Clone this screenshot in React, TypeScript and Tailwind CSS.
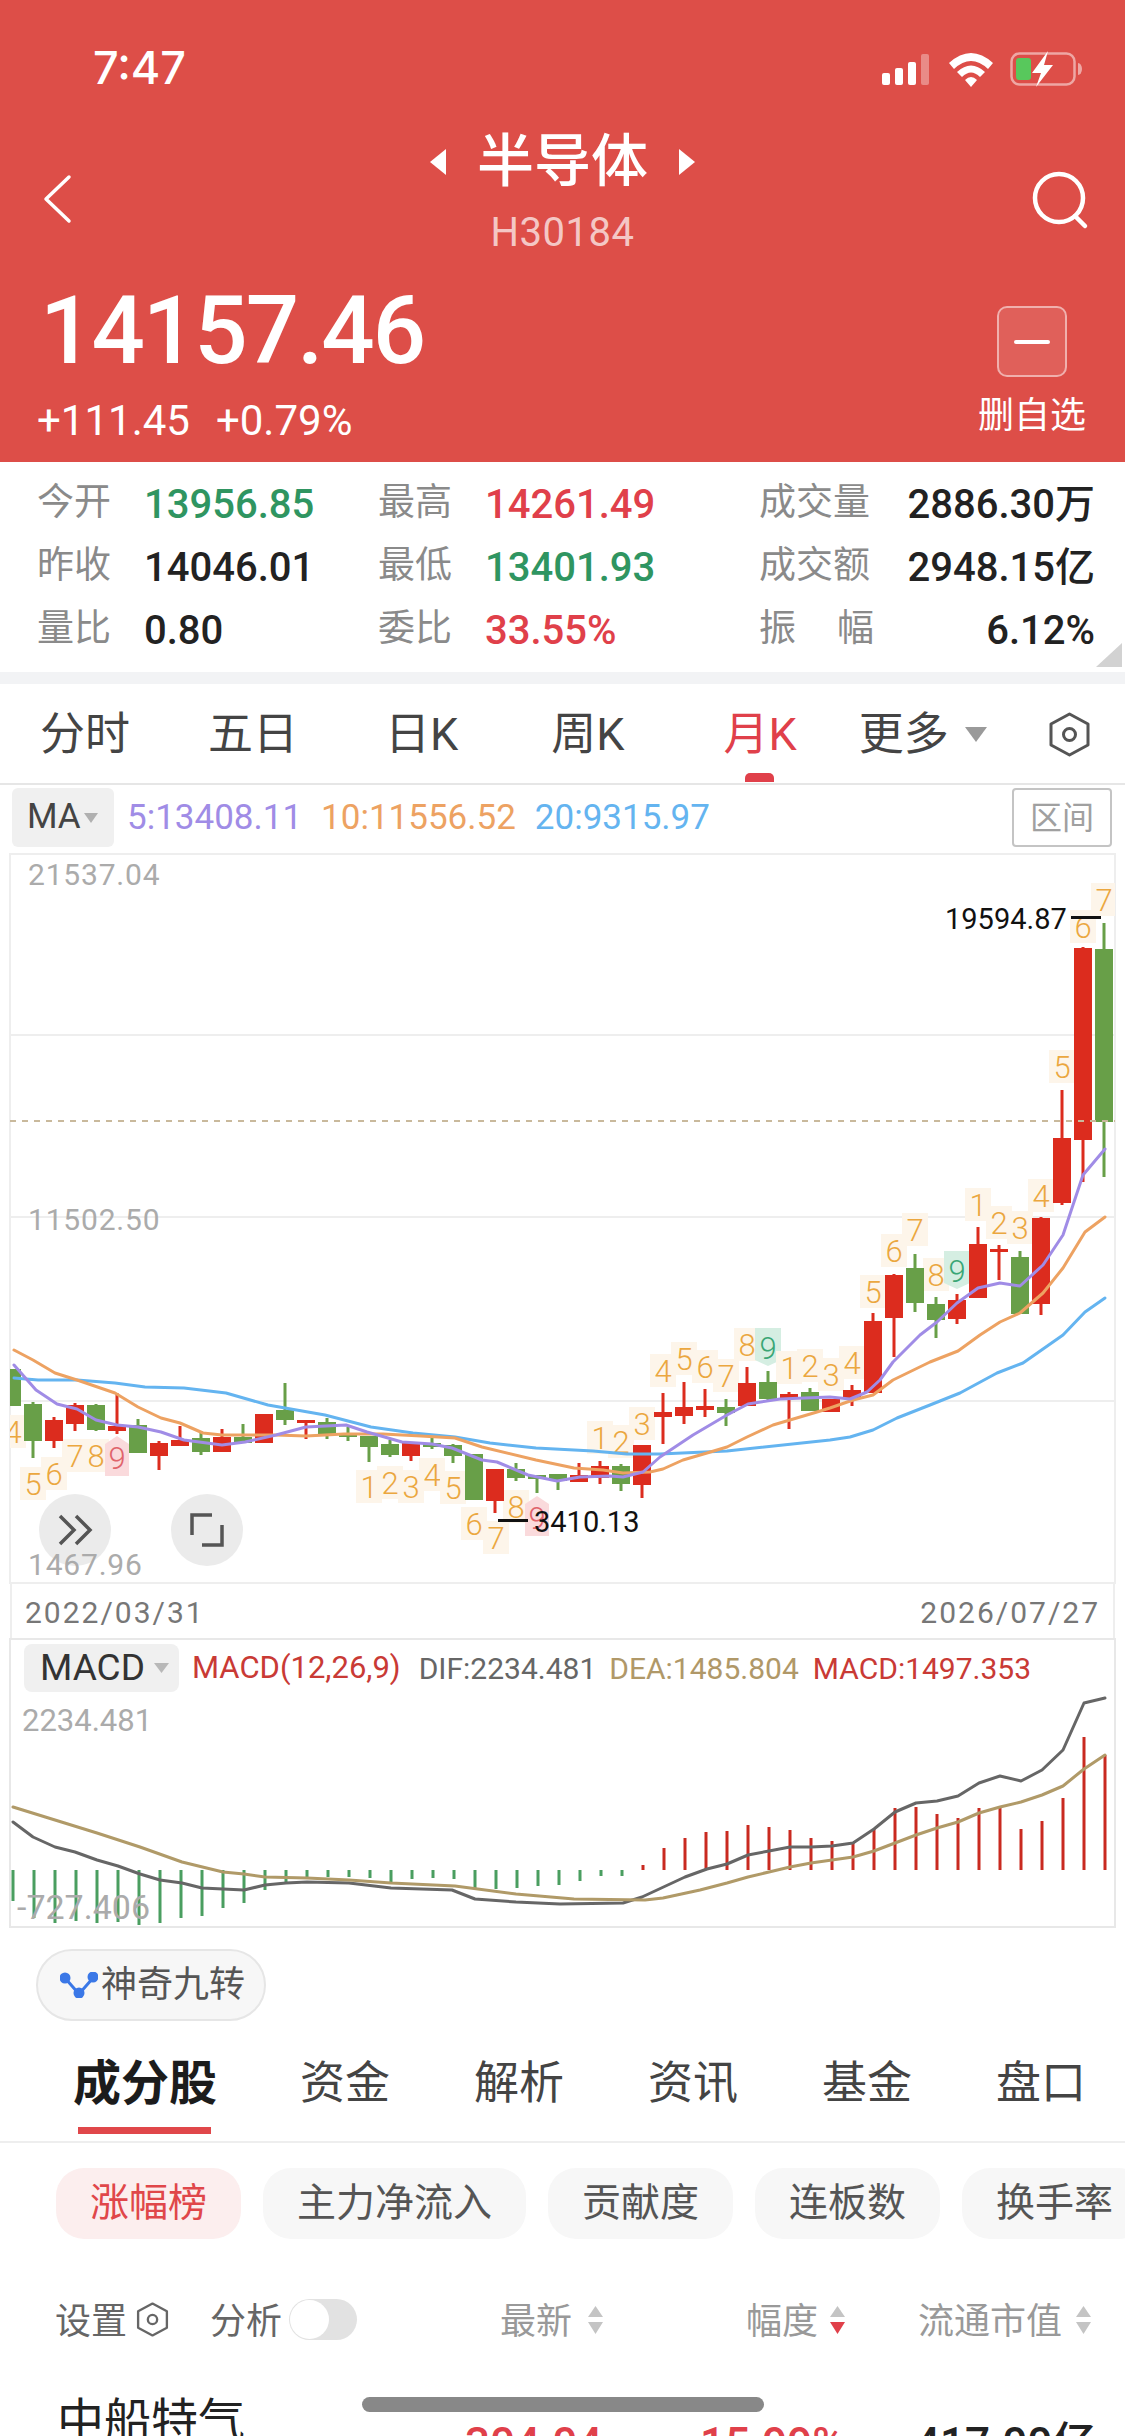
import React from "react";

type C = [number, number, number, number, number];
// 1 = red, 0 = green: [colour, bodyTop, bodyBottom, wickTop, wickBottom]
const candles: C[] = [
  [0,1369,1406,1369,1406],[0,1404,1441,1402,1458],[1,1420,1441,1417,1448],[1,1405,1424,1403,1431],[0,1405,1430,1404,1431],
  [1,1426,1431,1393,1434],[0,1425,1453,1419,1453],[1,1443,1456,1441,1470],[1,1440,1446,1426,1446],[0,1438,1452,1433,1455],
  [1,1437,1452,1429,1452],[0,1437,1443,1424,1443],[1,1414,1443,1414,1443],[0,1410,1420,1383,1425],[1,1420,1423,1420,1439],
  [0,1422,1435,1418,1439],[0,1433,1437,1427,1441],[0,1436,1447,1436,1462],[0,1444,1455,1440,1457],[1,1443,1456,1442,1461],
  [0,1443,1447,1437,1449],[0,1445,1456,1444,1463],[0,1454,1500,1454,1500],[1,1469,1501,1469,1513],[0,1469,1478,1463,1481],
  [0,1475,1479,1475,1493],[0,1474,1481,1474,1490],[1,1475,1482,1463,1482],[1,1466,1478,1461,1484],[0,1466,1484,1464,1491],
  [1,1445,1485,1445,1498],[1,1412,1417,1393,1444],[1,1407,1416,1382,1424],[1,1406,1410,1389,1417],[0,1407,1413,1399,1426],
  [1,1383,1406,1367,1406],[0,1382,1399,1371,1400],[1,1394,1398,1392,1429],[0,1392,1411,1388,1411],[1,1399,1412,1399,1412],
  [1,1390,1398,1385,1406],[1,1321,1393,1313,1393],[1,1275,1318,1274,1357],[0,1268,1303,1254,1312],[0,1304,1320,1297,1338],
  [1,1300,1319,1294,1324],[1,1244,1298,1227,1298],[1,1249,1252,1245,1280],[0,1257,1314,1251,1314],[1,1218,1304,1217,1315],
  [1,1138,1203,1090,1205],[1,948,1140,947,1182],[0,949,1122,923,1177],
];

const ma5 = "14,1365 36,1390 57,1404 77,1409 96,1420 117,1425 138,1427 161,1432 184,1440 222,1445 245,1442 276,1435 306,1427 346,1425 367,1432 402,1442 432,1444 452,1448 482,1460 497,1462 528,1475 557,1481 580,1477 610,1476 623,1477 643,1472 660,1457 693,1435 727,1415 748,1404 780,1399 830,1397 850,1399 867,1392 880,1380 893,1362 920,1335 937,1322 957,1303 978,1288 1000,1283 1020,1286 1043,1265 1063,1235 1083,1175 1105,1149";
const ma10 = "14,1350 33,1360 55,1373 77,1380 115,1393 138,1407 161,1418 180,1423 203,1433 222,1435 276,1435 306,1436 344,1434 383,1434 421,1436 455,1438 482,1447 536,1460 574,1468 603,1470 623,1473 650,1472 663,1469 683,1460 707,1453 727,1447 747,1437 773,1425 817,1412 830,1408 853,1400 873,1395 893,1380 930,1362 958,1351 980,1335 1000,1322 1020,1313 1043,1293 1063,1268 1085,1232 1105,1217";
const ma20 = "14,1378 38,1380 77,1380 115,1383 145,1387 184,1388 226,1393 268,1405 325,1415 371,1427 413,1433 455,1437 490,1443 536,1448 593,1451 627,1454 660,1454 727,1451 830,1440 850,1437 873,1430 897,1418 930,1405 960,1393 997,1373 1023,1363 1063,1335 1085,1312 1105,1298";

type L = [string, number, number, "o" | "p" | "g"];
const labels: L[] = [
  ["4",13,1432,"o"],["5",33,1484,"o"],["6",54,1474,"o"],["7",75,1456,"o"],["8",96,1456,"o"],["9",117,1458,"p"],
  ["1",369,1487,"o"],["2",390,1483,"o"],["3",411,1487,"o"],["4",432,1475,"o"],["5",453,1488,"o"],["6",474,1524,"o"],["7",496,1538,"o"],["8",516,1507,"o"],["9",537,1518,"p"],
  ["1",600,1438,"o"],["2",621,1442,"o"],["3",642,1424,"o"],["4",663,1371,"o"],["5",684,1359,"o"],["6",705,1367,"o"],["7",726,1376,"o"],["8",747,1345,"o"],["9",768,1348,"g"],
  ["1",789,1368,"o"],["2",810,1366,"o"],["3",831,1375,"o"],["4",852,1363,"o"],["5",873,1292,"o"],["6",894,1251,"o"],["7",915,1230,"o"],["8",936,1275,"o"],["9",957,1271,"g"],
  ["1",978,1205,"o"],["2",999,1223,"o"],["3",1020,1228,"o"],["4",1041,1196,"o"],["5",1062,1067,"o"],["6",1083,927,"o"],["7",1104,900,"o"],
];

// histogram ends, index 0..29 green below the zero line, 30.. red above it
const hist = [1901,1918,1923,1921,1923,1922,1925,1923,1918,1916,1908,1903,1890,1882,1877,1877,1877,1878,1882,1879,1878,1879,1888,1889,1888,1886,1885,1881,1876,1876,1865,1848,1838,1832,1831,1825,1827,1830,1838,1841,1843,1829,1808,1807,1814,1818,1808,1808,1829,1821,1798,1737,1755];
const dif = "13,1822 33,1837 55,1847 75,1852 97,1860 118,1866 140,1874 160,1880 182,1883 202,1888 223,1889 244,1890 265,1885 286,1883 307,1882 349,1883 391,1888 452,1890 475,1899 516,1902 560,1904 623,1903 642,1897 685,1877 707,1869 727,1864 748,1855 769,1851 790,1847 811,1847 832,1846 853,1843 874,1829 895,1812 916,1803 937,1801 958,1796 979,1783 1000,1776 1021,1781 1042,1770 1063,1750 1084,1703 1105,1698";
const dea = "13,1807 55,1820 97,1833 140,1847 182,1862 223,1872 244,1874 265,1877 307,1878 349,1880 391,1883 455,1886 516,1894 574,1899 645,1900 663,1898 700,1890 727,1883 748,1877 769,1872 790,1867 811,1863 832,1860 853,1857 874,1851 895,1843 916,1835 937,1828 958,1822 979,1813 1000,1807 1021,1802 1042,1795 1063,1786 1084,1769 1105,1755";

function Hex({ size, color }: { size: number; color: string }) {
  return (
    <svg width={size} height={size} viewBox="0 0 45 45" fill="none" stroke={color} strokeWidth="3" strokeLinejoin="round">
      <polygon points="22.5,2 41,12 41,33 22.5,43 4,33 4,12" />
      <circle cx="22.5" cy="22.5" r="6" />
    </svg>
  );
}

function Sort({ down }: { down?: boolean }) {
  return (
    <svg width="17" height="30" viewBox="0 0 17 30">
      <polygon points="8.5,1 16,12 1,12" fill="#c4c4c4" />
      <polygon points="8.5,29 16,17 1,17" fill={down ? "#e0404a" : "#c4c4c4"} />
    </svg>
  );
}

function Stat({ label, value, color }: { label: string; value: string; color: string }) {
  return (
    <>
      <span className="text-[37px] text-[#8a8a8a] w-[107px] shrink-0 -translate-y-[2px]">{label}</span>
      <span className={`text-[40px] font-medium ${color}`}>{value}</span>
    </>
  );
}

function Wide({ label, value }: { label: React.ReactNode; value: string }) {
  return (
    <div className="flex items-center flex-1 pr-[30px]">
      <span className="text-[37px] text-[#8a8a8a] w-[115px] shrink-0 flex justify-between -translate-y-[2px]">{label}</span>
      <span className="ml-auto text-[40px] font-medium text-[#222]">{value}</span>
    </div>
  );
}

function Row({ children }: { children: React.ReactNode }) {
  return <div className="flex items-center h-[63px] pl-[37px]">{children}</div>;
}

export default function App() {
  return (
    <div className="relative w-[1125px] h-[2436px] overflow-hidden bg-white font-['Roboto','Noto_Sans_CJK_SC',sans-serif]">
      <header className="h-[462px] bg-[#dd4e48] text-white flex flex-col">
        <div className="h-[130px] pt-[46px] pl-[93px] pr-[41px] flex items-start justify-between">
          <span className="font-['Inter',sans-serif] text-[45px] leading-[44px] font-medium">7:47</span>
          <svg width="204" height="40" viewBox="880 50 204 40" className="mt-[4px]">
            <rect x="882" y="73" width="8" height="12" rx="2" fill="#fff" />
            <rect x="895" y="68" width="8" height="17" rx="2" fill="#fff" />
            <rect x="908" y="62" width="8" height="23" rx="2" fill="#fff" />
            <rect x="921" y="54" width="8" height="31" rx="2" fill="#fff" fillOpacity=".35" />
            <path d="M949 63 Q971 43 993 63 L988 69 Q971 53 954 69 Z" fill="#fff" />
            <path d="M957 72 Q971 59 985 72 L980 77 Q971 68 962 77 Z" fill="#fff" />
            <path d="M965 80 Q971 74 977 80 L971 87 Z" fill="#fff" />
            <rect x="1011.5" y="53.5" width="63" height="31" rx="8" fill="none" stroke="#fff" strokeOpacity=".5" strokeWidth="2.5" />
            <path d="M1078 63 a4 6 0 0 1 0 12 Z" fill="#fff" fillOpacity=".5" />
            <rect x="1016" y="58" width="15" height="22" rx="3" fill="#58c85c" />
            <polygon points="1048,51 1032,73 1041,73 1036,87 1053,65 1044,65" fill="#fff" />
          </svg>
        </div>
        <div className="h-[138px] grid grid-cols-[112px_1fr_112px]">
          <svg width="30" height="50" viewBox="0 0 30 50" fill="none" stroke="#fff" strokeWidth="3.5" strokeLinecap="round" strokeLinejoin="round" className="mt-[44px] ml-[43px]">
            <path d="M26 3 L3 25 L26 47" />
          </svg>
          <div className="flex flex-col items-center pt-[2px]">
            <div className="flex items-center h-[60px] gap-[30px]">
              <svg width="18" height="26" viewBox="0 0 18 26"><polygon points="17,0 17,26 1,13" fill="#fff" /></svg>
              <span className="text-[57px] leading-[60px] font-medium">半导体</span>
              <svg width="18" height="26" viewBox="0 0 18 26"><polygon points="1,0 1,26 17,13" fill="#fff" /></svg>
            </div>
            <span className="mt-[19px] text-[40px] leading-[44px] text-white/70 tracking-[0.5px]">H30184</span>
          </div>
          <svg width="58" height="60" viewBox="0 0 58 60" fill="none" stroke="#fff" strokeWidth="4.5" strokeLinecap="round" className="mt-[40px] ml-[18px]">
            <circle cx="28" cy="28" r="24" />
            <path d="M44 46 L54 56" />
          </svg>
        </div>
        <div className="flex justify-between pl-[40px] pr-[39px]">
          <div className="flex flex-col">
            <span className="pt-[15px] text-[94px] leading-[96px] font-medium tracking-[-2px]">14157.46</span>
            <div className="mt-[20px] -ml-[3px] flex gap-[26px] text-[42px] leading-[44px]">
              <span>+111.45</span>
              <span>+0.79%</span>
            </div>
          </div>
          <div className="w-[108px] pt-[38px] flex flex-col items-center">
            <div className="w-[70px] h-[71px] rounded-[10px] border-2 border-white/50 bg-white/10 flex items-center justify-center">
              <div className="w-[36px] h-[4px] rounded-full bg-white" />
            </div>
            <span className="mt-[19px] text-[36px] leading-[40px] whitespace-nowrap">删自选</span>
          </div>
        </div>
      </header>

      <section className="relative h-[210px] pt-[11px]">
        <Row>
          <div className="flex items-center w-[341px]"><Stat label="今开" value="13956.85" color="text-[#2f9561]" /></div>
          <div className="flex items-center w-[381px]"><Stat label="最高" value="14261.49" color="text-[#e0404a]" /></div>
          <Wide label={<span>成交量</span>} value="2886.30万" />
        </Row>
        <Row>
          <div className="flex items-center w-[341px]"><Stat label="昨收" value="14046.01" color="text-[#222]" /></div>
          <div className="flex items-center w-[381px]"><Stat label="最低" value="13401.93" color="text-[#2f9561]" /></div>
          <Wide label={<span>成交额</span>} value="2948.15亿" />
        </Row>
        <Row>
          <div className="flex items-center w-[341px]"><Stat label="量比" value="0.80" color="text-[#222]" /></div>
          <div className="flex items-center w-[381px]"><Stat label="委比" value="33.55%" color="text-[#e0404a]" /></div>
          <Wide label={<><span>振</span><span>幅</span></>} value="6.12%" />
        </Row>
        <svg width="26" height="24" viewBox="0 0 26 24" className="absolute right-[3px] bottom-[5px]">
          <polygon points="26,0 26,24 0,24" fill="#d2d2d2" />
        </svg>
      </section>
      <div className="h-[12px] bg-[#f2f3f5]" />

      <nav className="h-[101px] border-b-2 border-[#e6e6e6] flex items-center pl-[40px] pt-[2px] text-[45px] leading-[50px] text-[#444]">
        <span>分时</span>
        <span className="ml-[78px]">五日</span>
        <span className="ml-[87px]">日K</span>
        <span className="ml-[93px]">周K</span>
        <span className="relative ml-[99px] text-[#e0404a]">
          月K
          <span className="absolute left-[21px] top-[63px] w-[29px] h-[9px] rounded-t-[5px] bg-[#e0404a]" />
        </span>
        <span className="ml-[62px]">更多</span>
        <svg width="22" height="15" viewBox="0 0 22 15" className="ml-[16px]"><polygon points="0,0 22,0 11,15" fill="#9a9a9a" /></svg>
        <span className="ml-[60px] flex"><Hex size={45} color="#555" /></span>
      </nav>

      <div className="h-[68px] pt-[3px] pl-[12px] pr-[13px] flex items-start">
        <div className="w-[102px] h-[59px] rounded-[6px] bg-[#f0f0f0] flex items-center pl-[15px] text-[35px] text-[#444]">
          MA
          <svg width="14" height="10" viewBox="0 0 14 10" className="ml-[3px]"><polygon points="0,0 14,0 7,10" fill="#b0b0b0" /></svg>
        </div>
        <div className="ml-[13px] h-[59px] pt-[2px] flex items-center gap-[19px] text-[35px]">
          <span className="text-[#a08ce6]">5:13408.11</span>
          <span className="text-[#eda262]">10:11556.52</span>
          <span className="text-[#64b4f0]">20:9315.97</span>
        </div>
        <div className="ml-auto w-[100px] h-[59px] rounded-[4px] border-2 border-[#c4c4c4] flex items-center justify-center text-[32px] text-[#a0a0a0]">区间</div>
      </div>

      <div className="relative h-[731px]">
        <svg width="1125" height="731" viewBox="0 853 1125 731" className="absolute inset-0">
          <defs>
            <clipPath id="frame"><rect x="10" y="853" width="1105" height="731" /></clipPath>
          </defs>
          <g stroke="#eeeeee" strokeWidth="2" fill="none">
            <rect x="10" y="854" width="1105" height="729" />
            <line x1="10" x2="1115" y1="1035" y2="1035" />
            <line x1="10" x2="1115" y1="1217" y2="1217" />
            <line x1="10" x2="1115" y1="1401" y2="1401" />
          </g>
          <g clipPath="url(#frame)">
            {labels.map(([t, x, y, k], i) => (
              <g key={i}>
                {k === "o" && <rect x={x - 13} y={y - 17} width="26" height="33" fill="#fdf5ea" />}
                {k === "p" && <polygon points={`${x - 12},${y - 14} ${x},${y - 22} ${x + 12},${y - 14} ${x + 12},${y + 18} ${x - 12},${y + 18}`} fill="#fadadc" />}
                {k === "g" && <polygon points={`${x - 13},${y - 20} ${x + 13},${y - 20} ${x + 13},${y + 12} ${x},${y + 18} ${x - 13},${y + 12}`} fill="#d5eee2" />}
                <text x={x} y={y + 11} textAnchor="middle" fontSize="31" fontWeight="300" fill={k === "o" ? "#eba73f" : k === "p" ? "#e0636b" : "#3aa675"}>{t}</text>
              </g>
            ))}
            {candles.map(([c, t, b, wt, wb], i) => {
              const x = 12 + 21 * i;
              const f = c ? "#dc2c1e" : "#689f48";
              return (
                <g key={i}>
                  <rect x={x - 1.5} y={wt} width="3" height={wb - wt} fill={f} />
                  <rect x={x - 9} y={t} width="18" height={b - t} fill={f} />
                </g>
              );
            })}
            <line x1="10" x2="1115" y1="1121" y2="1121" stroke="#c9b99c" strokeWidth="2" strokeDasharray="6 6" />
            <g fill="none" strokeWidth="3" strokeLinejoin="round" strokeLinecap="round">
              <polyline points={ma20} stroke="#64b4f0" />
              <polyline points={ma10} stroke="#eda262" />
              <polyline points={ma5} stroke="#a08ce6" />
            </g>
          </g>
          <rect x="1071" y="916" width="30" height="3" fill="#111" />
          <rect x="498" y="1519" width="30" height="3" fill="#111" />
          <circle cx="75" cy="1530" r="36" fill="#ebebeb" />
          <circle cx="207" cy="1530" r="36" fill="#ebebeb" />
          <g fill="none" stroke="#555" strokeWidth="3.5">
            <path d="M60 1516 L74 1530 L60 1544" />
            <path d="M76 1516 L90 1530 L76 1544" />
            <path d="M212 1515 L192 1515 L192 1535" />
            <path d="M202 1545 L222 1545 L222 1525" />
          </g>
        </svg>
        <span className="absolute left-[28px] top-[6px] text-[30px] leading-[32px] text-[#ababab] tracking-[0.8px]">21537.04</span>
        <span className="absolute left-[28px] top-[351px] text-[30px] leading-[32px] text-[#ababab] tracking-[0.8px]">11502.50</span>
        <span className="absolute left-[28px] top-[696px] text-[30px] leading-[32px] text-[#ababab] tracking-[0.8px]">1467.96</span>
        <span className="absolute left-[945px] top-[50px] text-[29px] leading-[32px] text-[#111]">19594.87</span>
        <span className="absolute left-[534px] top-[653px] text-[29px] leading-[32px] text-[#111]">3410.13</span>
      </div>

      <div className="h-[54px] pt-[2px] mx-[10px] border-x-2 border-[#eeeeee] px-[13px] flex items-center justify-between text-[30px] text-[#777] tracking-[2px]">
        <span>2022/03/31</span>
        <span>2026/07/27</span>
      </div>

      <div className="relative h-[290px]">
        <svg width="1125" height="290" viewBox="0 1638 1125 290" className="absolute inset-0">
          <rect x="10" y="1639" width="1105" height="288" fill="none" stroke="#e8e8e8" strokeWidth="2" />
          {hist.map((v, i) => {
            const x = 13 + 21 * i;
            const up = v < 1870;
            return <rect key={i} x={x - 1.5} y={up ? v : 1870} width="3" height={Math.abs(v - 1870)} fill={i < 30 ? "#4a9e60" : "#c92a20"} />;
          })}
          <g fill="none" strokeWidth="3" strokeLinejoin="round" strokeLinecap="round">
            <polyline points={dif} stroke="#666666" />
            <polyline points={dea} stroke="#b09a68" />
          </g>
        </svg>
        <div className="relative pt-[6px] pl-[24px] flex items-start">
          <div className="w-[155px] h-[48px] rounded-[8px] bg-[#f0f0f0] flex items-center pl-[16px] text-[37px] text-[#333]">
            MACD
            <svg width="15" height="10" viewBox="0 0 15 10" className="ml-[9px]"><polygon points="0,0 15,0 7.5,10" fill="#b8b8b8" /></svg>
          </div>
          <div className="ml-[13px] h-[48px] flex items-center text-[30px] whitespace-nowrap">
            <span className="text-[31px] text-[#c93a35]">MACD(12,26,9)</span>
            <span className="ml-[18px] text-[#666]">DIF:2234.481</span>
            <span className="ml-[13px] text-[#b09868]">DEA:1485.804</span>
            <span className="ml-[14px] text-[#c93a35]">MACD:1497.353</span>
          </div>
        </div>
        <span className="absolute left-[22px] top-[67px] text-[31px] leading-[32px] text-[#ababab]">2234.481</span>
        <span className="absolute left-[17px] top-[253px] text-[34px] leading-[32px] text-[#ababab]">-727.406</span>
      </div>

      <div className="h-[93px] pt-[21px] pl-[36px]">
        <div className="w-[230px] h-[72px] rounded-full bg-[#f7f7f7] border-2 border-[#e6e6e6] flex items-center pl-[22px] text-[36px] text-[#555]">
          <svg width="38" height="26" viewBox="0 0 38 26" fill="none" stroke="#3b78e7" strokeWidth="3">
            <path d="M5 6 L19 22 L33 6" />
            <circle cx="5" cy="6" r="4" fill="#3b78e7" />
            <circle cx="19" cy="21" r="4" fill="#3b78e7" />
            <circle cx="33" cy="5" r="4" fill="#3b78e7" />
          </svg>
          <span className="ml-[3px] whitespace-nowrap">神奇九转</span>
        </div>
      </div>

      <div className="h-[122px] pl-[73px] pt-[6px] border-b-2 border-[#eeeeee] flex items-center text-[45px] text-[#444]">
        <span className="relative text-[48px] font-bold text-[#1c1c1c]">
          成分股
          <span className="absolute left-[5px] right-[6px] top-[79px] h-[7px] bg-[#e0474a]" />
        </span>
        <span className="ml-[83px]">资金</span>
        <span className="ml-[84px]">解析</span>
        <span className="ml-[84px]">资讯</span>
        <span className="ml-[84px]">基金</span>
        <span className="ml-[84px]">盘口</span>
      </div>

      <div className="pt-[25px] pl-[56px] flex gap-[22px] text-[39px] text-[#555] whitespace-nowrap">
        <span className="h-[71px] px-[34px] rounded-[28px] bg-[#fceeee] text-[#e0474a] flex items-center">涨幅榜</span>
        <span className="h-[71px] px-[34px] rounded-[28px] bg-[#f7f7f7] flex items-center">主力净流入</span>
        <span className="h-[71px] px-[34px] rounded-[28px] bg-[#f7f7f7] flex items-center">贡献度</span>
        <span className="h-[71px] px-[34px] rounded-[28px] bg-[#f7f7f7] flex items-center">连板数</span>
        <span className="h-[71px] px-[34px] rounded-[28px] bg-[#f7f7f7] flex items-center">换手率</span>
      </div>

      <div className="mt-[60px] h-[41px] pl-[55px] flex items-center text-[36px] text-[#999] whitespace-nowrap">
        <span className="translate-y-[2px] text-[#666]">设置</span>
        <span className="ml-[8px] flex"><Hex size={35} color="#666" /></span>
        <span className="ml-[40px] translate-y-[2px] text-[#666]">分析</span>
        <span className="ml-[7px] w-[68px] h-[41px] rounded-full bg-[#e2e2e2] flex items-center pl-[1px]">
          <span className="w-[39px] h-[39px] rounded-full bg-white" />
        </span>
        <span className="ml-[143px] translate-y-[2px]">最新</span>
        <span className="ml-[15px] flex"><Sort /></span>
        <span className="ml-[142px] translate-y-[2px]">幅度</span>
        <span className="ml-[11px] flex"><Sort down /></span>
        <span className="ml-[72px] translate-y-[2px]">流通市值</span>
        <span className="ml-[13px] flex"><Sort /></span>
      </div>

      <div className="mt-[53px] pl-[57px] flex items-start whitespace-nowrap">
        <span className="w-[408px] text-[47px] leading-[56px] text-[#222]">中船特气</span>
        <span className="w-[235px] mt-[23px] text-[44px] leading-[56px] font-medium text-[#e0404a]">304.04</span>
        <span className="w-[215px] mt-[23px] text-[44px] leading-[56px] font-medium text-[#e0404a]">15.99%</span>
        <span className="mt-[23px] text-[44px] leading-[56px] font-medium text-[#222]">417.00亿</span>
      </div>

      <div className="absolute left-[362px] top-[2397px] w-[402px] h-[15px] rounded-full bg-[#888888]" />
    </div>
  );
}
